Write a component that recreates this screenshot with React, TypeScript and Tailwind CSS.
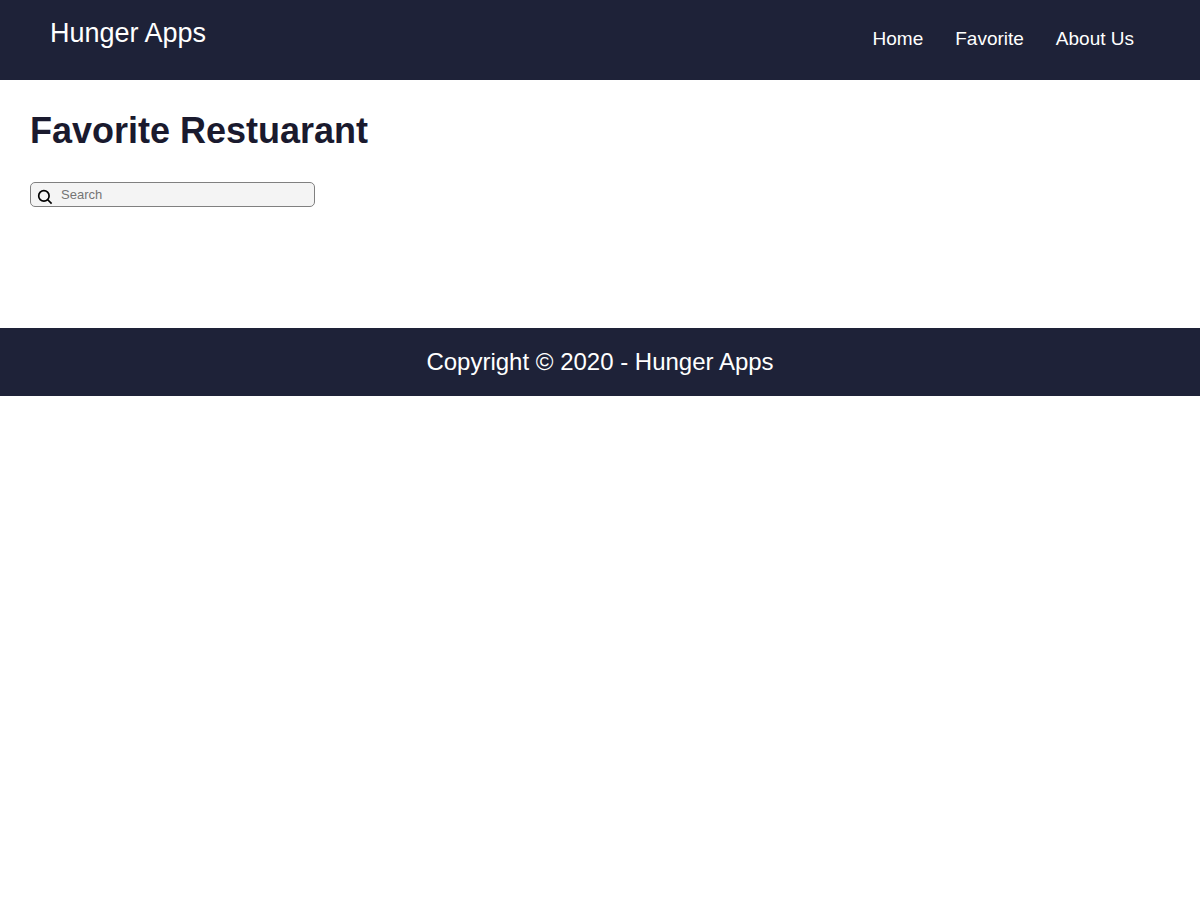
export default function App() {
  return (
    <div className="bg-white font-['Liberation_Sans',Arial,sans-serif] text-[#1a1a2e]">
      <header className="flex min-h-20 items-start justify-between bg-[#1e2238] pr-[66px] pl-[50px] text-white">
        <a href="#home" className="pt-4 text-[27px] leading-[34px]">
          Hunger Apps
        </a>
        <nav className="pt-7">
          <ul className="flex gap-8 text-[19px] leading-[22px]">
            <li><a href="#home">Home</a></li>
            <li><a href="#favorite">Favorite</a></li>
            <li><a href="#about">About Us</a></li>
          </ul>
        </nav>
      </header>
      <main className="px-[30px] pt-[30px] pb-[121px]">
        <h1 className="text-4xl leading-[42px] font-bold">Favorite Restuarant</h1>
        <form className="mt-[30px] flex h-[25px] w-[285px] items-center rounded-[5px] border border-[#808080] bg-[#f4f4f4]">
          <svg viewBox="0 0 16 16" className="mt-1 ml-1.5 size-4 shrink-0" fill="none" stroke="#000" strokeWidth="1.7" aria-hidden="true">
            <circle cx="6.9" cy="6.9" r="5.2" />
            <path d="M10.5 10.5 14.6 14.6" />
          </svg>
          <input
            type="search"
            aria-label="Search"
            placeholder="Search"
            className="ml-2 min-w-0 flex-1 bg-transparent text-[13px] leading-4 outline-none placeholder:text-[#757575]"
          />
        </form>
      </main>
      <footer className="bg-[#1e2238] py-[18px] text-center text-2xl text-white">
        Copyright © 2020 - Hunger Apps
      </footer>
    </div>
  );
}
